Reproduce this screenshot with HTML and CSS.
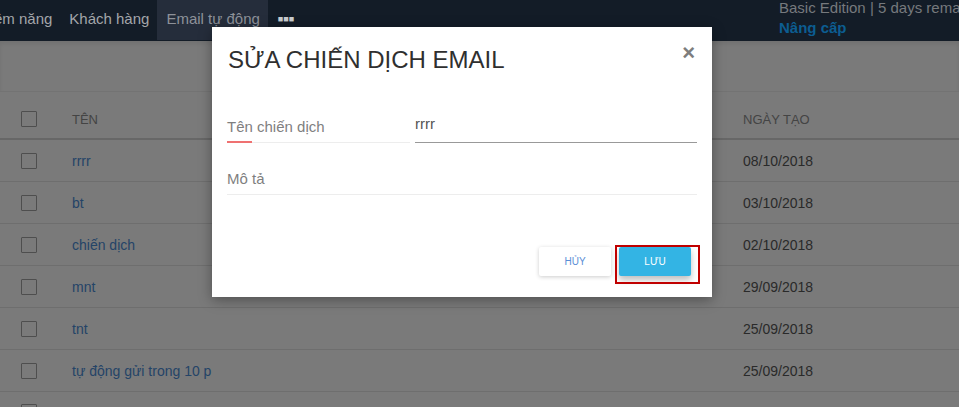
FILE: index.html
```html
<!DOCTYPE html>
<html lang="vi">
<head>
    <meta charset="UTF-8">
    <title>Email tự động</title>
    <link rel="stylesheet" href="styles.css">
</head>
<body>
    <div class="topbar">
        <ul class="menu">
            <li class="menu-item first">Tiềm năng</li>
            <li class="menu-item">Khách hàng</li>
            <li class="menu-item active">Email tự động</li>
            <li class="menu-item more">&#9632;&#9632;&#9632;</li>
        </ul>
        <div class="account">
            <div class="edition">Basic Edition | 5 days remaining</div>
            <a class="upgrade">Nâng cấp</a>
        </div>
    </div>

    <div class="main">
        <div class="toolbar"></div>
        <div class="table">
            <div class="row head">
                <span class="cell check"><span class="box"></span></span>
                <span class="cell">TÊN</span>
                <span class="cell">NGÀY TẠO</span>
            </div>
            <div class="row">
                <span class="cell check"><span class="box"></span></span>
                <a class="cell name">rrrr</a>
                <span class="cell date">08/10/2018</span>
            </div>
            <div class="row">
                <span class="cell check"><span class="box"></span></span>
                <a class="cell name">bt</a>
                <span class="cell date">03/10/2018</span>
            </div>
            <div class="row">
                <span class="cell check"><span class="box"></span></span>
                <a class="cell name">chiến dịch</a>
                <span class="cell date">02/10/2018</span>
            </div>
            <div class="row">
                <span class="cell check"><span class="box"></span></span>
                <a class="cell name">mnt</a>
                <span class="cell date">29/09/2018</span>
            </div>
            <div class="row">
                <span class="cell check"><span class="box"></span></span>
                <a class="cell name">tnt</a>
                <span class="cell date">25/09/2018</span>
            </div>
            <div class="row">
                <span class="cell check"><span class="box"></span></span>
                <a class="cell name">tự động gửi trong 10 p</a>
                <span class="cell date">25/09/2018</span>
            </div>
            <div class="row last">
                <span class="cell check"><span class="box"></span></span>
            </div>
        </div>

        <div class="backdrop"></div>

        <div class="modal">
            <div class="modal-header">
                <h2>SỬA CHIẾN DỊCH EMAIL</h2>
                <span class="close">&times;</span>
            </div>
            <div class="modal-body">
                <div class="field">
                    <label class="field-label">Tên chiến dịch</label>
                    <input type="text" class="field-input" value="rrrr">
                </div>
                <div class="field plain">
                    <label class="field-label">Mô tả</label>
                </div>
            </div>
            <div class="modal-footer">
                <button class="btn cancel">HỦY</button>
                <span class="mark">
                    <button class="btn save">LƯU</button>
                </span>
            </div>
        </div>
    </div>
</body>
</html>
```

FILE: styles.css
```css
body {
    margin: 0;
    font-family: "Liberation Sans", Arial, sans-serif;
    background-color: #ffffff;
    overflow: hidden;
    height: 407px;
}
.topbar {
    display: flex;
    justify-content: space-between;
    height: 41px;
    background-color: #131c27;
}
.menu {
    display: flex;
    list-style: none;
    margin: 0 0 0 -27px;
    padding: 0;
    height: 40px;
}
.menu-item {
    padding: 0 8px 0 9px;
    line-height: 38px;
    font-size: 15px;
    color: #a3a6aa;
}
.menu-item.active {
    background-color: #252d3b;
    color: #8d9199;
}
.menu-item.more {
    font-size: 9px;
    color: #c9ccd0;
    padding-left: 10px;
}
.account {
    width: 180px;
    white-space: nowrap;
    overflow: hidden;
    font-size: 15px;
}
.edition {
    color: #76797d;
    line-height: 17px;
    margin-top: -1px;
}
.upgrade {
    display: block;
    color: #0c5d91;
    font-weight: bold;
    line-height: 20px;
    margin-top: 2px;
}

.main {
    position: relative;
    height: 366px;
}
.toolbar {
    height: 50px;
    border-bottom: 1px solid #f1f1f1;
    box-shadow: inset 0 3px 4px rgba(0,0,0,0.08);
}
.table {
    height: 315px;
    overflow: hidden;
}
.row {
    display: grid;
    grid-template-columns: 72px 671px 1fr;
    align-items: center;
    height: 42px;
    box-sizing: border-box;
    padding-top: 1px;
    border-bottom: 1px solid #e6e6e6;
    font-size: 14px;
}
.row.head {
    height: 48px;
    padding-top: 8px;
    border-bottom: 2px solid #d7d7d7;
    color: #8e8e8e;
    font-size: 13px;
}
.row.last {
    align-items: start;
    padding-top: 12px;
}
.check {
    padding-left: 21px;
    display: flex;
}
.box {
    width: 14px;
    height: 14px;
    border: 1px solid #a4a4a4;
    border-radius: 1px;
}
.name {
    color: #4d8ed8;
}
.date {
    color: #585858;
}

.backdrop {
    position: absolute;
    left: 0;
    top: 0;
    right: 0;
    bottom: 0;
    background-color: rgba(0,0,0,0.52);
}

.modal {
    position: absolute;
    left: 212px;
    top: -14px;
    width: 500px;
    height: 270px;
    background-color: white;
    box-shadow: 0 3px 12px rgba(0,0,0,0.35);
    box-sizing: border-box;
    padding: 0 15px 0 15px;
}
.modal-header {
    display: flex;
    justify-content: space-between;
    align-items: flex-start;
    height: 76px;
}
.modal-header h2 {
    margin: 18px 0 0 1px;
    font-size: 24px;
    font-weight: normal;
    color: #2f2f2f;
    line-height: 30px;
}
.close {
    margin: 14px 2px 0 0;
    font-size: 22px;
    font-weight: bold;
    color: #7d7d7d;
    line-height: 24px;
}
.modal-body {
    height: 144px;
}
.field {
    display: flex;
    align-items: flex-end;
    height: 40px;
}
.field-label {
    width: 183px;
    height: 38px;
    box-sizing: border-box;
    padding-top: 3px;
    line-height: 38px;
    font-size: 15px;
    color: #7f7f7f;
    border-bottom: 1px solid #ededed;
    position: relative;
}
.field-label:after {
    content: "";
    position: absolute;
    left: 0;
    bottom: -1px;
    width: 25px;
    height: 2px;
    background-color: #ef7171;
}
.field-input {
    margin-left: 5px;
    flex: 1;
    height: 38px;
    border: none;
    border-bottom: 1px solid #999;
    padding: 0;
    box-sizing: border-box;
    font-family: inherit;
    font-size: 15px;
    color: #555;
    outline: none;
}
.field.plain {
    margin-top: 12px;
}
.field.plain .field-label {
    width: 100%;
}
.field.plain .field-label:after {
    display: none;
}
.modal-footer {
    display: flex;
    justify-content: flex-end;
    gap: 8px;
    padding-right: 6px;
}
.btn {
    width: 72px;
    height: 29px;
    border: none;
    border-radius: 2px;
    font-family: inherit;
    font-size: 10px;
    cursor: pointer;
}
.cancel {
    background-color: white;
    color: #5b8ed6;
    box-shadow: 0 1px 4px rgba(0,0,0,0.2);
}
.save {
    background-color: #33b4e4;
    color: white;
    box-shadow: 0 4px 6px rgba(0,0,0,0.25);
}
.mark {
    position: relative;
    display: flex;
}
.mark:after {
    content: "";
    position: absolute;
    left: -4px;
    top: -2px;
    right: -9px;
    bottom: -8px;
    border: 2px solid #c00000;
}
```
